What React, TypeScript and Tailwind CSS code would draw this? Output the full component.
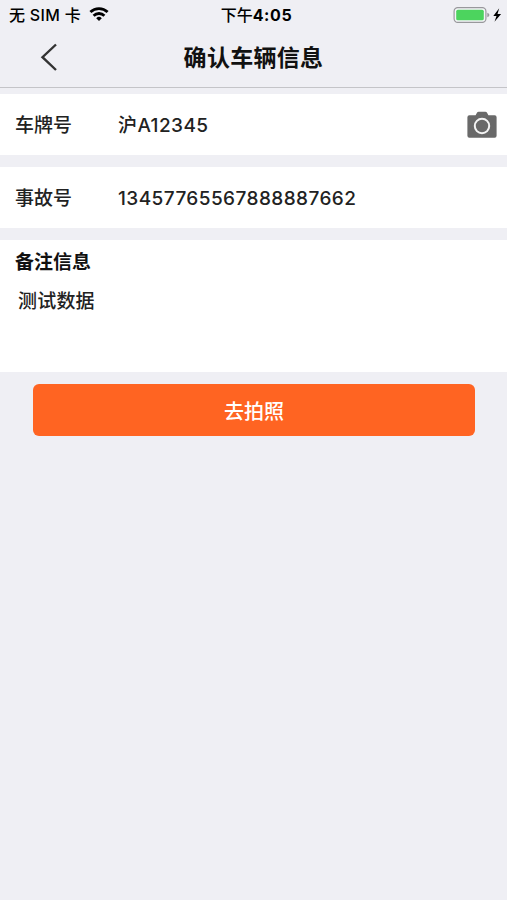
import type { ReactNode } from 'react';

function WifiIcon() {
  return (
    <svg viewBox="0 0 20 14" className="mb-px h-[14px] w-5" fill="none" stroke="#000" strokeWidth="2.8">
      <path d="M1.4 5.1a12.3 12.3 0 0 1 17.2 0" />
      <path d="M4.6 8.7a7.7 7.7 0 0 1 10.8 0" />
      <path d="M10 14 7.2 11.2a4 4 0 0 1 5.6 0z" fill="#000" stroke="none" />
    </svg>
  );
}

function BatteryIcon() {
  return (
    <svg viewBox="0 0 50 18" className="h-[18px] w-[50px]">
      <rect x="1.1" y="1.6" width="31.8" height="14.8" rx="3.6" fill="#f5f5f8" stroke="#98989c" strokeWidth="1.2" />
      <rect x="3.2" y="3.7" width="27.6" height="10.6" rx="1.6" fill="#4cd45e" />
      <path d="M34.3 6.8c1.5.5 2 1.2 2 2.2s-.5 1.7-2 2.2z" fill="#98989c" />
      <path d="M46.2 2.2 40.3 9.9h3.2l-2 5.9 6.6-7.9h-3.6z" fill="#000" />
    </svg>
  );
}

function CameraIcon() {
  return (
    <svg viewBox="0 0 30 28" className="h-7 w-[30px]">
      <path
        d="M2.4 4.3h6.2l1.5-2.7Q10.6.7 11.6.7h6.8q1 0 1.5.9l1.5 2.7h6.2q2 0 2 2v18.4q0 2-2 2H2.4q-2 0-2-2V6.3q0-2 2-2z"
        fill="#696969"
      />
      <circle cx="15" cy="15" r="7.2" fill="none" stroke="#f4f4f4" strokeWidth="2" />
    </svg>
  );
}

function StatusBar() {
  return (
    <div className="grid h-7 grid-cols-3 text-[16px] font-medium leading-7 text-black">
      <div className="flex items-center gap-2 pl-[9px]">
        <span className="whitespace-nowrap pt-px tracking-[0.3px]">无 SIM 卡</span>
        <WifiIcon />
      </div>
      <div className="flex justify-center pl-[6px] pt-px">
        <span>下午</span>
        <span className="font-bold tracking-[0.6px]">4:05</span>
      </div>
      <div className="flex items-center justify-end pr-1">
        <BatteryIcon />
      </div>
    </div>
  );
}

function NavBar({ title }: { title: string }) {
  return (
    <div className="relative flex h-[60px] items-center justify-center border-b border-[#c4c4c8]">
      <button type="button" aria-label="返回" className="absolute left-10 top-[15px]">
        <svg viewBox="0 0 18 28" className="h-7 w-[18px]" fill="none" stroke="#333" strokeWidth="2.4">
          <path d="M16 1.5 2.5 14.2 16 27" />
        </svg>
      </button>
      <h1 className="pt-px text-[23px] font-bold leading-none tracking-[0.3px] text-[#111]">{title}</h1>
    </div>
  );
}

interface RowProps {
  label: string;
  value: string;
  action?: ReactNode;
}

function Row({ label, value, action }: RowProps) {
  return (
    <div className="flex h-[61px] items-center bg-white pl-[15px] pr-[10px] text-[19px] font-medium text-[#222]">
      <span className="w-[103px] pt-[3px]">{label}</span>
      <span className="flex-1 pt-[3px] tracking-[0.43px]">{value}</span>
      {action}
    </div>
  );
}

export default function App() {
  return (
    <div className="min-h-screen bg-[#efeff4] font-['Inter','Noto_Sans_CJK_SC',sans-serif]">
      <StatusBar />
      <NavBar title="确认车辆信息" />

      <div className="mt-1.5 space-y-3">
        <Row label="车牌号" value="沪A12345" action={<CameraIcon />} />
        <Row label="事故号" value="13457765567888887662" />

        <div className="h-[132px] bg-white px-[15px] pt-[9px] text-[19px] text-[#222]">
          <div className="font-bold leading-7 text-[#111]">备注信息</div>
          <div className="mt-[11px] pl-[3px] font-medium leading-7 tracking-[0.2px]">测试数据</div>
        </div>

        <div className="px-8">
          <button
            type="button"
            className="mx-px h-[52px] w-[442px] rounded-md bg-[#ff6422] pt-[3px] text-[20px] font-medium text-white"
          >
            去拍照
          </button>
        </div>
      </div>
    </div>
  );
}
